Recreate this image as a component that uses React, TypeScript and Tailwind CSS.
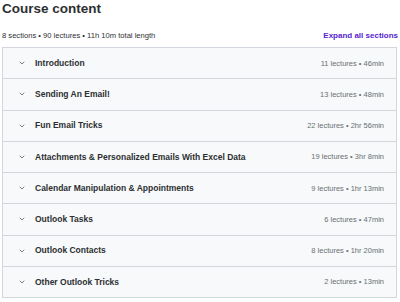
const sections = [
  { title: "Introduction", meta: "11 lectures • 46min" },
  { title: "Sending An Email!", meta: "13 lectures • 48min" },
  { title: "Fun Email Tricks", meta: "22 lectures • 2hr 56min" },
  { title: "Attachments & Personalized Emails With Excel Data", meta: "19 lectures • 3hr 8min" },
  { title: "Calendar Manipulation & Appointments", meta: "9 lectures • 1hr 13min" },
  { title: "Outlook Tasks", meta: "6 lectures • 47min" },
  { title: "Outlook Contacts", meta: "8 lectures • 1hr 20min" },
  { title: "Other Outlook Tricks", meta: "2 lectures • 13min" },
];

const Chevron = () => (
  <svg width="6" height="4" viewBox="0 0 6 4" fill="none" className="shrink-0">
    <path d="M1 1 L3 3 L5 1" stroke="#6a6f73" strokeWidth="0.9" strokeLinecap="round" strokeLinejoin="round" />
  </svg>
);

export default function App() {
  return (
    <div
      className="w-[400px] h-[302px] bg-white overflow-hidden text-[#2d2f31]"
      style={{ fontFamily: '"Liberation Sans", Arial, sans-serif' }}
    >
      {/* Header */}
      <h2 className="pl-[2px] pt-0 h-[18px] text-[13.5px] leading-[18px] font-bold">Course content</h2>
      <div className="flex items-end justify-between pl-[2px] pr-[2px] h-[29px] pb-[6px]">
        <span className="text-[7.6px] leading-[10px] text-[#2d2f31]">
          8 sections • 90 lectures • 11h 10m total length
        </span>
        <span className="text-[8px] leading-[10px] font-bold text-[#5624d0]">Expand all sections</span>
      </div>

      {/* Sections list */}
      <div className="ml-[2px] w-[395px] border border-b-0 border-[#d1d7dc]">
        {sections.map((s) => (
          <div
            key={s.title}
            className="flex items-center h-[31.25px] bg-[#f7f9fa] border-b border-[#d1d7dc] pl-[16px] pr-[12px]"
          >
            <Chevron />
            <span className="ml-[10px] text-[8.5px] font-bold text-[#2d2f31] flex-1 truncate">{s.title}</span>
            <span className="text-[7.5px] text-[#6a6f73]">{s.meta}</span>
          </div>
        ))}
      </div>
    </div>
  );
}
